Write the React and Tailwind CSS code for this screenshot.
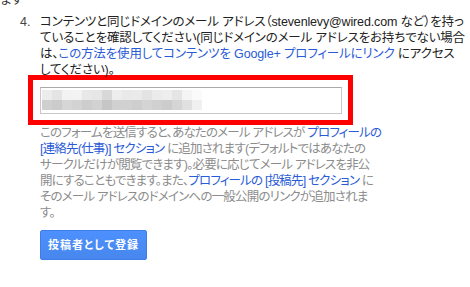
export default function App() {
  const jp = "font-['Liberation_Sans','Noto_Sans_CJK_JP',sans-serif] [font-feature-settings:'palt']";
  return (
    <div className={`w-[470px] h-[287px] bg-white overflow-hidden text-[12.5px] leading-4 ${jp}`}>
      <div className="h-[14px] overflow-hidden text-[#333]">
        <div className="mt-[-8px]">ます</div>
      </div>
      <div className="flex">
        <div className="w-[40px] shrink-0 pl-[20px] text-[#444]">4.</div>
        <div className="flex-1 text-[#222] whitespace-nowrap tracking-[-0.15px]">
          <div>コンテンツと同じドメインのメール アドレス（stevenlevy@wired.com など）を持っ</div>
          <div>ていることを確認してください(同じドメインのメール アドレスをお持ちでない場合</div>
          <div>
            は、<span className="text-[#2a5bd7]">この方法を使用してコンテンツを Google+ プロフィールにリンク</span> にアクセス
          </div>
          <div>してください)。</div>
        </div>
      </div>
      <div className="ml-[28px] mt-[-3px] w-[325px] border-[5px] border-[#ff0000] pt-[7px] pb-[6px] pl-[7px] pr-[6px]">
        <div className="h-[27px] w-[302px] border border-[#c8c8c8] border-t-[#a9a9a9] bg-white pt-[2px] pl-[1px]">
          <div className="flex flex-col">
            <div className="flex h-[10px]">
              {["#ececec","#e4e4e4","#f2f2f2","#f3f3f3","#e8e8e8","#e6e6e6","#d8d8d8","#ededed","#e9e9e9","#eaeaea","#e3e3e3","#ebebeb","#eeeeee","#e5e5e5","#f4f4f4","#fafafa"].map((c, i) => (
                <div key={i} className="w-[10px] h-[10px]" style={{ background: c }} />
              ))}
            </div>
            <div className="flex h-[10px]">
              {["#cfcfcf","#cbcbcb","#d6d6d6","#d3d3d3","#cdcdcd","#d2d2d2","#c6c6c6","#d0d0d0","#d1d1d1","#cecece","#d4d4d4","#d0d0d0","#cccccc","#d5d5d5","#e0e0e0","#f0f0f0"].map((c, i) => (
                <div key={i} className="w-[10px] h-[10px]" style={{ background: c }} />
              ))}
            </div>
          </div>
        </div>
      </div>
      <div className="ml-[40px] text-[#8c8c8c] whitespace-nowrap tracking-[-0.8px]">
        <div>
          このフォームを送信すると、あなたのメール アドレスが <span className="text-[#2a5bd7]">プロフィールの</span>
        </div>
        <div>
          <span className="text-[#2a5bd7]">[連絡先(仕事)] セクション</span> に追加されます(デフォルトではあなたの
        </div>
        <div>サークルだけが閲覧できます)。必要に応じてメール アドレスを非公</div>
        <div>
          開にすることもできます。また、<span className="text-[#2a5bd7]">プロフィールの [投稿先] セクション</span> に
        </div>
        <div>そのメール アドレスのドメインへの一般公開のリンクが追加されま</div>
        <div>す。</div>
      </div>
      <div className="ml-[40px] mt-[9px]">
        <button className="h-[30px] w-[107px] rounded-[2px] border border-[#3b7de9] bg-gradient-to-b from-[#4d90fe] to-[#4787ed] text-white text-[11px] font-bold tracking-[1px] flex items-center justify-center">
          投稿者として登録
        </button>
      </div>
    </div>
  );
}
